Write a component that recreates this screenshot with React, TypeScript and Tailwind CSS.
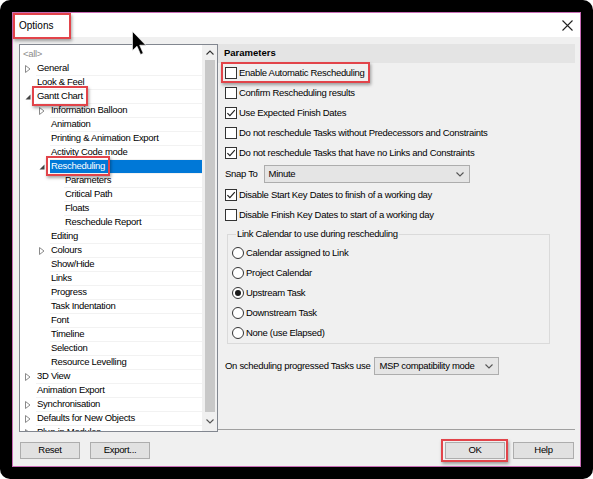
import React from "react";

type Node = {
  label: string;
  level: number;
  exp?: "open" | "closed";
  grey?: boolean;
  selected?: boolean;
  mark?: boolean;
};

const tree: Node[] = [
  { label: "<all>", level: -1, grey: true },
  { label: "General", level: 0, exp: "closed" },
  { label: "Look & Feel", level: 0 },
  { label: "Gantt Chart", level: 0, exp: "open", mark: true },
  { label: "Information Balloon", level: 1, exp: "closed" },
  { label: "Animation", level: 1 },
  { label: "Printing & Animation Export", level: 1 },
  { label: "Activity Code mode", level: 1 },
  { label: "Rescheduling", level: 1, exp: "open", selected: true, mark: true },
  { label: "Parameters", level: 2 },
  { label: "Critical Path", level: 2 },
  { label: "Floats", level: 2 },
  { label: "Reschedule Report", level: 2 },
  { label: "Editing", level: 1 },
  { label: "Colours", level: 1, exp: "closed" },
  { label: "Show/Hide", level: 1 },
  { label: "Links", level: 1 },
  { label: "Progress", level: 1 },
  { label: "Task Indentation", level: 1 },
  { label: "Font", level: 1 },
  { label: "Timeline", level: 1 },
  { label: "Selection", level: 1 },
  { label: "Resource Levelling", level: 1 },
  { label: "3D View", level: 0, exp: "closed" },
  { label: "Animation Export", level: 0 },
  { label: "Synchronisation", level: 0, exp: "closed" },
  { label: "Defaults for New Objects", level: 0, exp: "closed" },
  { label: "Plug-in Modules", level: 0, exp: "closed" },
];

const options = [
  { label: "Enable Automatic Rescheduling", checked: false, mark: true },
  { label: "Confirm Rescheduling results", checked: false },
  { label: "Use Expected Finish Dates", checked: true },
  { label: "Do not reschedule Tasks without Predecessors and Constraints", checked: false },
  { label: "Do not reschedule Tasks that have no Links and Constraints", checked: true },
];

const radios = [
  "Calendar assigned to Link",
  "Project Calendar",
  "Upstream Task",
  "Downstream Task",
  "None (use Elapsed)",
];

function RedBox({ className }: { className: string }) {
  return (
    <span
      className={`pointer-events-none absolute border-2 border-[#e2444a] shadow-[1px_2px_3px_rgba(0,0,0,0.35)] ${className}`}
    />
  );
}

function Expander({ kind }: { kind?: "open" | "closed" }) {
  if (kind === "closed")
    return (
      <svg width="6" height="8" viewBox="0 0 6 8">
        <path d="M0.5 0.5 L5 4 L0.5 7.5 Z" fill="none" stroke="#8a8a8a" strokeWidth="1" />
      </svg>
    );
  if (kind === "open")
    return (
      <svg width="6" height="6" viewBox="0 0 6 6">
        <path d="M5.5 0.5 L5.5 5.5 L0.5 5.5 Z" fill="#444" />
      </svg>
    );
  return null;
}

function Check({ checked }: { checked: boolean }) {
  return (
    <span className="flex h-[12px] w-[12px] shrink-0 items-center justify-center border border-[#333] bg-white">
      {checked && (
        <svg width="10" height="10" viewBox="0 0 10 10">
          <path d="M1.4 5.1 L3.9 7.6 L8.8 2.2" fill="none" stroke="#222" strokeWidth="1.2" />
        </svg>
      )}
    </span>
  );
}

function Radio({ on }: { on: boolean }) {
  return (
    <span className="flex h-[12px] w-[12px] shrink-0 items-center justify-center rounded-full border border-[#333] bg-white">
      {on && <span className="h-[6px] w-[6px] rounded-full bg-[#1a1a1a]" />}
    </span>
  );
}

function Chevron({ dir }: { dir: "down" | "up" }) {
  return (
    <svg width="8" height="5" viewBox="0 0 8 5">
      <path
        d={dir === "down" ? "M0.5 0.5 L4 4 L7.5 0.5" : "M0.5 4.5 L4 1 L7.5 4.5"}
        fill="none"
        stroke={dir === "down" ? "#555" : "#333"}
        strokeWidth="1.1"
      />
    </svg>
  );
}

function Select({ value, width }: { value: string; width: string }) {
  return (
    <div
      className={`flex h-[18px] items-center justify-between border border-[#adadad] bg-[#e5e5e5] pl-[4px] pr-[5px] ${width}`}
    >
      <span>{value}</span>
      <Chevron dir="down" />
    </div>
  );
}

function Button({ label, className = "" }: { label: string; className?: string }) {
  return (
    <div
      className={`flex h-[17px] items-center justify-center border border-[#adadad] bg-[#e1e1e1] ${className}`}
    >
      {label}
    </div>
  );
}

export default function App() {
  return (
    <div className="h-[479px] w-[593px] overflow-hidden bg-white font-['Liberation_Sans',Arial,sans-serif] text-[9.5px] tracking-[-0.3px] text-black">
      <div className="relative h-full rounded-[10px] bg-black p-[12px]">
        <div className="flex h-full flex-col border border-[#c86cb6] bg-[#f0f0f0]">
          {/* title bar */}
          <div className="flex h-[24px] items-center justify-between bg-white pr-[7px]">
            <span className="relative ml-[6px] text-[10px] tracking-normal">
              Options
              <RedBox className="-bottom-[6px] -left-[6px] -right-[18px] -top-[5px]" />
            </span>
            <svg width="11" height="11" viewBox="0 0 11 11">
              <path d="M0.5 0.5 L10.5 10.5 M10.5 0.5 L0.5 10.5" stroke="#222" strokeWidth="1.1" />
            </svg>
          </div>

          {/* body */}
          <div className="flex pl-[6px] pr-[5px] pt-[7px]">
            {/* tree */}
            <div className="flex h-[388px] w-[199px] border border-[#828790] bg-white">
              <div className="flex-1 overflow-hidden pt-[2px]">
                {tree.map((n) =>
                  n.level < 0 ? (
                    <div key={n.label} className="flex h-[15px] items-center pl-[3px] text-[#8c8c8c]">
                      {n.label}
                    </div>
                  ) : (
                    <div key={n.label} className="flex h-[14px] items-stretch">
                      <span
                        className="flex shrink-0 items-center"
                        style={{ width: 16 + n.level * 14, paddingLeft: 5 + n.level * 14 }}
                      >
                        <Expander kind={n.exp} />
                      </span>
                      <span
                        className={`flex flex-1 items-center border-b border-[#f2f2f2] pl-[1px] ${
                          n.selected ? "bg-[#0078d7] text-white" : ""
                        }`}
                      >
                        <span className="relative whitespace-nowrap">
                          {n.label}
                          {n.mark && (
                            <RedBox className="-bottom-[2px] -left-[5px] -right-[5px] -top-[3px]" />
                          )}
                        </span>
                      </span>
                    </div>
                  )
                )}
              </div>
              {/* scrollbar */}
              <div className="flex w-[15px] flex-col items-center bg-[#f0f0f0]">
                <div className="flex h-[15px] items-center justify-center">
                  <Chevron dir="up" />
                </div>
                <div className="h-[352px] w-[10px] bg-[#c8c8c8]" />
                <div className="flex flex-1 items-center justify-center">
                  <Chevron dir="down" />
                </div>
              </div>
            </div>

            {/* parameters panel */}
            <div className="flex h-[386px] flex-1 flex-col border-b border-[#a0a0a0]">
              <div className="flex h-[19px] items-center bg-[#e4e4e4] pl-[6px] font-bold tracking-normal">
                Parameters
              </div>
              <div className="flex flex-col pl-[7px]">
                {options.map((o) => (
                  <div key={o.label} className="flex h-[20px] items-center">
                    <span className="relative flex items-center gap-[2px]">
                      <Check checked={o.checked} />
                      <span>{o.label}</span>
                      {o.mark && <RedBox className="-bottom-[3px] -left-[4px] -right-[6px] -top-[4px]" />}
                    </span>
                  </div>
                ))}
                <div className="flex h-[22px] items-center gap-[6px]">
                  <span>Snap To</span>
                  <Select value="Minute" width="w-[206px]" />
                </div>
                <div className="flex h-[20px] items-center gap-[2px]">
                  <Check checked />
                  <span>Disable Start Key Dates to finish of a working day</span>
                </div>
                <div className="flex h-[20px] items-center gap-[2px]">
                  <Check checked={false} />
                  <span>Disable Finish Key Dates to start of a working day</span>
                </div>
                <fieldset className="ml-[2px] mr-[25px] border border-[#dadada] pb-0 pl-[4px]">
                  <legend className="ml-[4px] h-[18px] px-[1px] leading-[18px]">
                    Link Calendar to use during rescheduling
                  </legend>
                  {radios.map((r) => (
                    <div key={r} className="flex h-[20px] items-center gap-[2px]">
                      <Radio on={r === "Upstream Task"} />
                      <span>{r}</span>
                    </div>
                  ))}
                </fieldset>
                <div className="mt-[13px] flex h-[18px] items-center gap-[4px]">
                  <span>On scheduling progressed Tasks use</span>
                  <Select value="MSP compatibility mode" width="w-[125px]" />
                </div>
              </div>
            </div>
          </div>

          {/* buttons */}
          <div className="mt-[10px] flex items-center pl-[7px] pr-[6px]">
            <Button label="Reset" className="w-[60px]" />
            <Button label="Export..." className="ml-[10px] w-[60px]" />
            <span className="relative ml-auto">
              <Button label="OK" className="w-[60px] border-[#0078d7]" />
              <RedBox className="-bottom-[3px] -left-[4px] -right-[3px] -top-[3px]" />
            </span>
            <Button label="Help" className="ml-[8px] w-[61px]" />
          </div>
        </div>

        {/* mouse pointer */}
        <svg
          className="pointer-events-none absolute left-[132px] top-[31px]"
          width="15"
          height="25"
          viewBox="0 0 15 25"
        >
          <path d="M0.5 0.5 V19.5 L5 15.2 L8.6 23.5 L11.2 22.3 L7.7 14.2 H13.8 Z" fill="#000" stroke="#fff" strokeWidth="0.6" />
        </svg>
      </div>
    </div>
  );
}
